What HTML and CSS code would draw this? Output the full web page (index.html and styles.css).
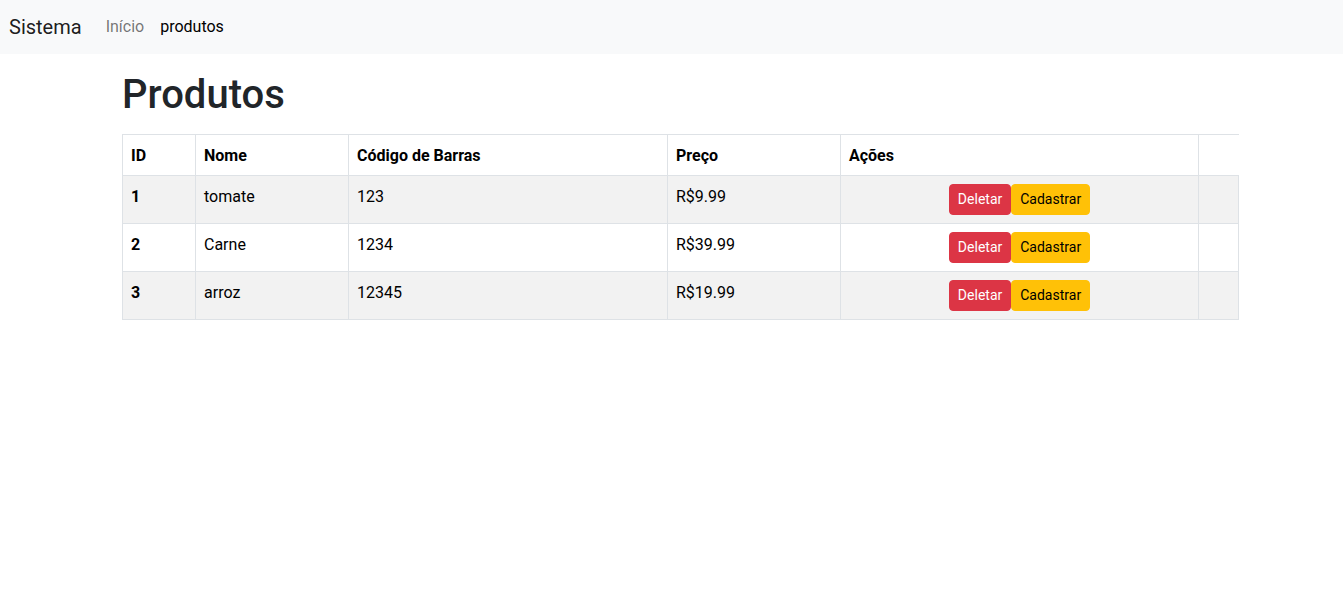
FILE: index.html
```html
<!DOCTYPE html>
<html lang="pt-BR">
<head>
<meta charset="utf-8">
<title>Produtos</title>
<link rel="stylesheet" href="styles.css">
</head>
<body>
<nav class="navbar">
  <a class="brand" href="#">Sistema</a>
  <ul class="nav">
    <li><a class="nav-link" href="#">Início</a></li>
    <li><a class="nav-link active" href="#">produtos</a></li>
  </ul>
</nav>
<main class="container">
  <h1 class="title">Produtos</h1>
  <table class="table">
    <colgroup>
      <col class="c-id"><col class="c-nome"><col class="c-cod"><col class="c-preco"><col class="c-acoes"><col class="c-extra">
    </colgroup>
    <thead>
      <tr><th>ID</th><th>Nome</th><th>Código de Barras</th><th>Preço</th><th>Ações</th><th class="blank"></th></tr>
    </thead>
    <tbody>
      <tr class="odd"><th>1</th><td>tomate</td><td>123</td><td>R$9.99</td><td class="actions"><button class="btn btn-danger">Deletar</button><button class="btn btn-warning">Cadastrar</button></td><td></td></tr>
      <tr><th>2</th><td>Carne</td><td>1234</td><td>R$39.99</td><td class="actions"><button class="btn btn-danger">Deletar</button><button class="btn btn-warning">Cadastrar</button></td><td></td></tr>
      <tr class="odd"><th>3</th><td>arroz</td><td>12345</td><td>R$19.99</td><td class="actions"><button class="btn btn-danger">Deletar</button><button class="btn btn-warning">Cadastrar</button></td><td></td></tr>
    </tbody>
  </table>
</main>
</body>
</html>
```

FILE: styles.css
```css
* { box-sizing: border-box; }
html, body { margin: 0; padding: 0; }
body {
  font-family: Roboto, "Liberation Sans", sans-serif;
  font-size: 16px;
  line-height: 1.5;
  color: #212529;
  background: #fff;
}
a { text-decoration: none; }

.navbar {
  display: flex;
  align-items: center;
  height: 54px;
  background: #f8f9fa;
  padding: 0 12px 0 9px;
}
.brand {
  font-size: 20px;
  line-height: 30px;
  color: rgba(0,0,0,0.9);
  margin-right: 16px;
}
.nav {
  display: flex;
  list-style: none;
  margin: 0;
  padding: 0;
}
.nav-link {
  display: block;
  padding: 8px 8px;
  color: rgba(0,0,0,0.55);
}
.nav-link.active { color: #000; }

.container {
  padding-left: 122px;
}
.title {
  font-size: 40px;
  font-weight: 500;
  line-height: 48px;
  margin: 17px 0 15px;
  color: #212529;
}

.table {
  width: 1116px;
  border-collapse: collapse;
  table-layout: fixed;
  color: #000;
}
.c-id { width: 73px; }
.c-nome { width: 153px; }
.c-cod { width: 319px; }
.c-preco { width: 173px; }
.c-acoes { width: 358px; }
.c-extra { width: 40px; }

.table th, .table td {
  border: 1px solid #dee2e6;
  padding: 9px 8px 7px;
  text-align: left;
  vertical-align: top;
}
.table th { font-weight: 700; }
.table th.blank { border-right: none; }
.table tr.odd > * { background: #f2f2f2; }
.table td.actions { text-align: center; padding: 8px; }

.btn {
  display: inline-block;
  font-family: inherit;
  font-size: 14px;
  line-height: 21px;
  padding: 4px 8px;
  border: 1px solid transparent;
  border-radius: 4px;
  cursor: pointer;
  vertical-align: middle;
}
.btn-danger { background: #dc3545; border-color: #dc3545; color: #fff; }
.btn-warning { background: #ffc107; border-color: #ffc107; color: #000; }
```
